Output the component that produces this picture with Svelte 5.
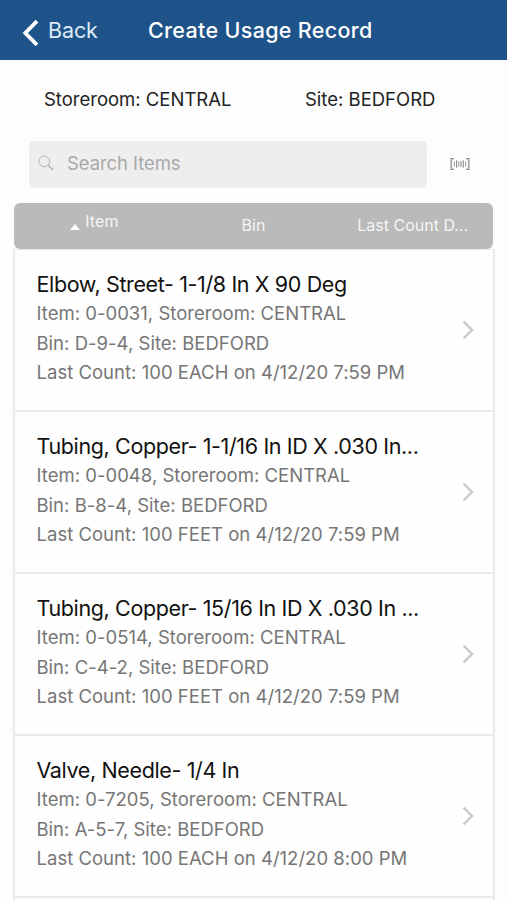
<script>
  const storeroom = 'CENTRAL';
  const site = 'BEDFORD';

  let search = $state('');

  const items = [
    { name: 'Elbow, Street- 1-1/8 In X 90 Deg', item: '0-0031', bin: 'D-9-4', count: '100 EACH', date: '4/12/20 7:59 PM' },
    { name: 'Tubing, Copper- 1-1/16 In ID X .030 In...', item: '0-0048', bin: 'B-8-4', count: '100 FEET', date: '4/12/20 7:59 PM' },
    { name: 'Tubing, Copper- 15/16 In ID X .030 In ...', item: '0-0514', bin: 'C-4-2', count: '100 FEET', date: '4/12/20 7:59 PM' },
    { name: 'Valve, Needle- 1/4 In', item: '0-7205', bin: 'A-5-7', count: '100 EACH', date: '4/12/20 8:00 PM' }
  ];
</script>

<div class="screen">
  <header class="navbar">
    <button class="back">
      <svg width="18" height="28" viewBox="0 0 18 28">
        <path d="M16 2.2 L4.3 14 L16 25.8" fill="none" stroke="#fff" stroke-width="3.8" />
      </svg>
      <span>Back</span>
    </button>
    <h1>Create Usage Record</h1>
  </header>

  <div class="location">
    <span class="storeroom">Storeroom: {storeroom}</span>
    <span class="site">Site: {site}</span>
  </div>

  <div class="search-row">
    <label class="search">
      <svg width="16" height="16" viewBox="0 0 16 16" fill="none" stroke="#b4b4b4">
        <circle cx="6.3" cy="6.3" r="5.3" stroke-width="1" />
        <path d="M10.2 10.2 L15 15" stroke-width="1.6" />
      </svg>
      <input type="text" placeholder="Search Items" bind:value={search} />
    </label>
    <button class="scan" aria-label="Scan barcode">
      <svg width="20" height="12" viewBox="0 0 20 12" fill="none" stroke="#8c8c8c">
        <path d="M4 0.7 H1.2 V11.3 H4 M16 0.7 H18.8 V11.3 H16" stroke-width="1.3" />
        <path d="M4.4 3.5 V8.5 M8.8 3.5 V8.5 M15.6 3.5 V8.5" stroke-width="0.9" />
        <path d="M6.6 2.2 V9.8 M11 3 V9 M13.3 2.2 V9.8" stroke-width="1.1" />
      </svg>
    </button>
  </div>

  <!-- Sort header -->
  <div class="sortbar">
    <button class="sort active">
      <svg width="10" height="6" viewBox="0 0 10 6"><path d="M0 6 L5 0 L10 6 Z" fill="#fff" /></svg>
      <span>Item</span>
    </button>
    <button class="sort">Bin</button>
    <button class="sort last">Last Count D...</button>
  </div>

  <ul class="list">
    {#each items as row}
      <li>
        <div class="info">
          <h2>{row.name}</h2>
          <p>Item: {row.item}, Storeroom: {storeroom}</p>
          <p>Bin: {row.bin}, Site: {site}</p>
          <p>Last Count: {row.count} on {row.date}</p>
        </div>
        <svg class="chevron" width="12" height="20" viewBox="0 0 12 20">
          <path d="M1.5 1.5 L10 10 L1.5 18.5" fill="none" stroke="#c9c9c9" stroke-width="2.4" />
        </svg>
      </li>
    {/each}
  </ul>
</div>

<style>
  :global(body) {
    background: #fdfdfd;
  }

  .screen {
    height: 900px;
    overflow: hidden;
    display: flex;
    flex-direction: column;
    background: #fdfdfd;
    font-family: Inter, 'Liberation Sans', sans-serif;
  }

  button {
    padding: 0;
    border: 0;
    background: none;
    font: inherit;
    color: inherit;
  }

  .navbar {
    flex: none;
    box-sizing: border-box;
    height: 60px;
    padding-left: 21px;
    display: flex;
    align-items: center;
    background: #1f548a;
    color: #fff;
  }

  .back {
    width: 127px;
    display: flex;
    align-items: center;
    gap: 9px;
    font-size: 21.5px;
    letter-spacing: -0.1px;
    color: #dfeaf6;
  }

  .back svg {
    margin-top: 5px;
  }

  h1 {
    margin: 0;
    font-size: 21.5px;
    font-weight: 500;
    letter-spacing: 0.33px;
    white-space: nowrap;
  }

  .location {
    flex: none;
    height: 81px;
    padding-left: 44px;
    display: flex;
    align-items: center;
    box-sizing: border-box;
    padding-bottom: 3px;
    font-size: 18.5px;
    color: #222;
    white-space: nowrap;
  }

  .storeroom {
    width: 261px;
  }

  .search-row {
    flex: none;
    height: 47px;
    padding-left: 29px;
    display: flex;
    align-items: center;
  }

  .search {
    box-sizing: border-box;
    width: 398px;
    height: 47px;
    padding-left: 9px;
    padding-bottom: 3px;
    display: flex;
    align-items: center;
    gap: 13px;
    border-radius: 5px;
    background: #eee;
  }

  input {
    flex: 1;
    min-width: 0;
    padding: 0 0 1px;
    border: 0;
    outline: none;
    background: none;
    font: inherit;
    font-size: 18.5px;
    letter-spacing: -0.08px;
    color: #333;
  }

  input::placeholder {
    color: #a9a9a9;
    opacity: 1;
  }

  .scan {
    margin-left: 23px;
    margin-bottom: 2px;
    height: 12px;
    display: flex;
  }

  .sortbar {
    flex: none;
    box-sizing: border-box;
    height: 46px;
    margin: 15px 14px 0 14px;
    padding-bottom: 2px;
    display: grid;
    grid-template-columns: 1fr 1fr 1fr;
    align-items: center;
    border-radius: 6px;
    background: #bababa;
    color: #f5f5f5;
    font-size: 16px;
  }

  .sort {
    display: flex;
    align-items: center;
    justify-content: center;
    white-space: nowrap;
  }

  .sort.active {
    gap: 5px;
    padding: 0 0 8px 1px;
    letter-spacing: 0.1px;
  }

  .sort.active svg {
    margin-top: 11px;
  }

  .sort.last {
    padding-right: 1px;
  }

  .list {
    flex: none;
    height: 652px;
    margin: 0 12px 0 13px;
    padding: 0;
    list-style: none;
    border: 2px solid #e9e9e9;
    border-top-width: 1px;
    border-bottom: 0;
    background: #fefefe;
  }

  li {
    box-sizing: border-box;
    height: 162px;
    padding: 19px 19px 0 21.5px;
    display: flex;
    justify-content: space-between;
    border-bottom: 2px solid #e9e9e9;
  }

  .info {
    white-space: nowrap;
  }

  h2 {
    margin: 0;
    font-size: 21.5px;
    font-weight: 400;
    line-height: 30px;
    letter-spacing: -0.37px;
    color: #111;
  }

  p {
    margin: 0;
    font-size: 18.5px;
    line-height: 29.6px;
    letter-spacing: 0.02px;
    color: #767676;
  }

  .chevron {
    flex: none;
    margin-top: 51px;
  }
</style>
